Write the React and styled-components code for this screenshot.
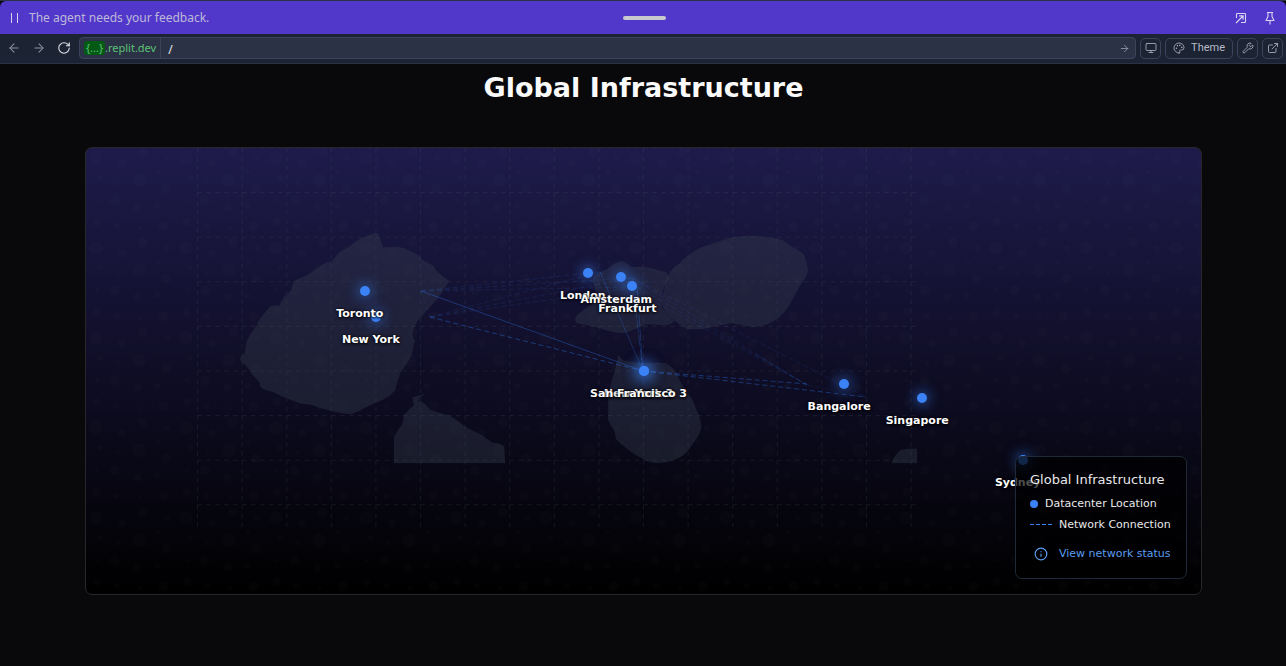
import React from 'react';
import styled, { createGlobalStyle } from 'styled-components';
import { ArrowLeft, ArrowRight, RotateCw, Monitor, Palette, Wrench, ExternalLink, Info } from 'lucide-react';

const GlobalStyle = createGlobalStyle`
  *, *::before, *::after { box-sizing: border-box; }
  body {
    margin: 0;
    background: #09090b;
    color: #fafafa;
    font-family: "DejaVu Sans", sans-serif;
  }
`;

const Shell = styled.div`
  display: flex;
  flex-direction: column;
  min-height: 100vh;
  border-top: 1px solid #2b3245;
`;

const AgentBar = styled.header`
  display: grid;
  grid-template-columns: 1fr auto 1fr;
  align-items: center;
  height: 33px;
  padding: 0 8px 0 10px;
  background: #5138cb;
  border-radius: 6px 6px 0 0;
`;

const AgentStatus = styled.div`
  display: flex;
  align-items: center;
  gap: 10px;
  color: #bdbad8;
  font: 12px/16px "Noto Sans", sans-serif;
`;

const PauseMark = styled.span`
  display: flex;
  justify-content: space-between;
  width: 9px;
  height: 10px;
  padding: 0 1px;

  &::before, &::after {
    content: "";
    width: 1px;
    background: #d6d3ec;
  }
`;

const DragHandle = styled.span`
  width: 43px;
  height: 4px;
  border-radius: 2px;
  background: #c8c9cf;
`;

const AgentActions = styled.div`
  display: flex;
  justify-content: flex-end;
  gap: 13px;
`;

const IconButton = styled.button`
  display: grid;
  place-items: center;
  width: 16px;
  height: 16px;
  padding: 0;
  border: 0;
  background: none;
  color: ${(p) => p.$color || '#d9d6f2'};
`;

const Toolbar = styled.nav`
  display: flex;
  align-items: center;
  gap: 4px;
  height: 30px;
  padding: 0 3px 1px 6px;
  background: #1c2333;
  border-bottom: 1px solid #2b3245;
`;

const NavButtons = styled.div`
  display: flex;
  gap: 9px;
  width: 69px;
`;

const AddressBar = styled.div`
  flex: 1;
  display: flex;
  align-items: center;
  height: 22px;
  padding-right: 3px;
  border: 1px solid #3c445c;
  border-radius: 4px;
  background: #2b3245;
`;

const Host = styled.label`
  display: flex;
  align-items: center;
  height: 20px;
  padding: 0 4px;
  border-right: 1px solid #3c445c;
  color: #5cc075;
  font: 11px/14px "Noto Sans", sans-serif;
`;

const HostId = styled.span`
  min-width: 21px;
  text-align: center;
  border-radius: 3px;
  background: #045a14;
`;

const PathInput = styled.input`
  flex: 1;
  min-width: 0;
  height: 20px;
  padding: 2px 7px 0;
  border: 0;
  outline: 0;
  background: none;
  color: #e4e7ec;
  font: 12px/14px "Noto Sans", sans-serif;
`;

const ToolButton = styled.button`
  display: flex;
  align-items: center;
  justify-content: center;
  gap: 6px;
  height: 21px;
  min-width: 21px;
  padding: 0 ${(p) => (p.$labelled ? 7 : 0)}px;
  border: 1px solid #3c445c;
  border-radius: 5px;
  background: none;
  color: #b4b9c4;
  font: 11px/14px Roboto, sans-serif;
`;

const Page = styled.main`
  flex: 1;
  padding: 8px 84px 68px 85px;
`;

const Title = styled.h1`
  margin: 0 0 43px;
  font-size: 27px;
  line-height: 32px;
  text-align: center;
`;

const MapCard = styled.section`
  position: relative;
  border: 1px solid #27272a;
  border-radius: 7px;
  background: linear-gradient(to bottom, #1e1b4b, #000000);
  overflow: hidden;
`;

const MapDrawing = styled.svg`
  display: block;
  width: 100%;
  height: auto;
`;

const Marker = styled.div`
  position: absolute;
  left: ${(p) => p.$x}%;
  top: ${(p) => p.$y}%;
  width: 10px;
  height: 10px;
  margin: -5px;
  border-radius: 50%;
  background: #3b82f6;
  box-shadow: 0 0 ${(p) => (p.$strong ? 14 : 13)}px ${(p) => (p.$strong ? 3 : 2)}px rgba(59, 130, 246, 0.6);
`;

const MarkerLabel = styled.span`
  position: absolute;
  top: 20px;
  left: 0;
  transform: translateX(-50%);
  white-space: nowrap;
  color: #ffffff;
  font-size: 11px;
  line-height: 16px;
  font-weight: 700;
  text-shadow: 0 0 3px rgba(0, 0, 0, 0.9), 0 1px 3px rgba(0, 0, 0, 0.9);
`;

const Legend = styled.aside`
  position: absolute;
  right: 14px;
  bottom: 15px;
  width: 172px;
  padding: 14px 14px 13px;
  border: 1px solid #1f2937;
  border-radius: 7px;
  background: rgba(0, 0, 0, 0.7);
`;

const LegendTitle = styled.h2`
  margin: 0 0 7px;
  font-size: 13px;
  line-height: 18px;
  font-weight: 400;
  white-space: nowrap;
  color: #e8e8ea;
`;

const LegendItem = styled.div`
  display: flex;
  align-items: center;
  gap: 7px;
  margin-bottom: 5px;
  font-size: 11px;
  line-height: 16px;
  white-space: nowrap;
  color: #e8e8ea;
`;

const DotKey = styled.span`
  width: 8px;
  height: 8px;
  border-radius: 50%;
  background: #3b82f6;
`;

const LineKey = styled.svg`
  width: 22px;
  height: 2px;
  flex: none;
`;

const StatusLink = styled.a`
  display: flex;
  align-items: center;
  gap: 11px;
  height: 22px;
  margin-top: 10px;
  padding-left: 4px;
  color: #5b9df0;
  font-size: 11px;
  line-height: 16px;
  text-decoration: none;
  white-space: nowrap;
`;

const locations = [
  { name: 'New York', x: 26, y: 38 },
  { name: 'Toronto', x: 25, y: 32 },
  { name: 'London', x: 45, y: 28 },
  { name: 'Amsterdam', x: 48, y: 29 },
  { name: 'Frankfurt', x: 49, y: 31 },
  { name: 'New York 3', x: 50, y: 50, strong: true },
  { name: 'San Francisco 3', x: 50, y: 50, strong: true },
  { name: 'Bangalore', x: 68, y: 53 },
  { name: 'Singapore', x: 75, y: 56 },
  { name: 'Sydney', x: 84, y: 70 },
];

// Bubble texture tile: [cx, cy, r]
const bubbles = [
  [11, 11, 7], [59, 36, 7], [16, 33, 3], [79, 64, 3], [34, 87, 3], [90, 11, 3],
  [12, 82, 4], [40, 17, 4], [63, 5, 5], [57, 66, 4], [86, 87, 5], [32, 58, 5],
  [89, 45, 5], [80, 27, 2], [60, 89, 2], [35, 39, 2], [12, 58, 2],
];

const columns = Array.from({ length: 17 }, (_, i) => 100 + i * 40);
const rows = Array.from({ length: 9 }, (_, i) => i * 40);

// Network routes: [x1, y1, x2, y2, opacity, dash]
const routes = [
  [421, 291, 643, 371, 0.34, 'none'],
  [430, 317, 643, 371, 0.4, '5 3'],
  [600, 272, 643, 371, 0.26, 'none'],
  [632, 279, 643, 371, 0.26, '12 2'],
  [637, 287, 643, 371, 0.26, '12 2'],
  [643, 371, 807, 384, 0.36, '5 3'],
  [643, 371, 866, 397, 0.36, '5 3'],
  [421, 291, 600, 272, 0.14, '5 3'],
  [421, 291, 632, 278, 0.12, '5 3'],
  [421, 291, 637, 287, 0.12, '5 3'],
  [430, 317, 600, 272, 0.12, '5 3'],
  [430, 317, 632, 278, 0.12, '5 3'],
  [430, 317, 637, 287, 0.12, '5 3'],
  [421, 291, 430, 317, 0.1, '5 3'],
  [600, 272, 807, 385, 0.1, '5 3'],
  [632, 278, 807, 385, 0.11, '5 3'],
  [637, 287, 807, 385, 0.11, '5 3'],
  [755, 354, 805, 384, 0.12, 'none'],
  [632, 278, 866, 397, 0.12, '5 3'],
  [807, 385, 866, 397, 0.08, '5 3'],
];

const PopOutIcon = () => (
  <svg width="12" height="12" viewBox="0 0 12 12" fill="none" stroke="currentColor" strokeWidth="1.1" aria-hidden="true">
    <path d="M1.5 6V2.2Q1.5 1.5 2.2 1.5H9.8Q10.5 1.5 10.5 2.2V9.8Q10.5 10.5 9.8 10.5H6M1 11L8 4M4.2 3.9H8.1V7.8" />
  </svg>
);

const PinIcon = () => (
  <svg width="10" height="14" viewBox="0 0 10 14" fill="none" stroke="currentColor" strokeWidth="1.1" strokeLinejoin="round" aria-hidden="true">
    <path d="M2 1.5H8M3 1.5V5.5L1 9.5H9L7 5.5V1.5M5 9.5V13.5" />
  </svg>
);

const WorldMap = () => (
  <MapDrawing viewBox="86 148 1115 446" aria-hidden="true">
    <defs>
      <pattern id="bubbles" x="86" y="148" width="90" height="90" patternUnits="userSpaceOnUse" viewBox="0 0 100 100">
        {bubbles.map(([cx, cy, r]) => (
          <circle key={`${cx}-${cy}`} cx={cx} cy={cy} r={r} fill="#9c92ac" fillOpacity="0.018" />
        ))}
      </pattern>
    </defs>
    <rect x="86" y="148" width="1115" height="446" fill="url(#bubbles)" />

    <g fill="#374151" fillOpacity="0.36" stroke="#4b5563" strokeOpacity="0.12" strokeWidth="2" strokeLinejoin="round">
      <g transform="translate(220 210) scale(0.3333)">
        <path d="M470 69Q476 70 478 80L489 113Q512 110 535 111Q554 114 570 123Q588 130 600 140Q604 149 612 153L640 168Q646 180 655 188L687 214L660 255Q648 272 630 290L590 335Q578 355 576 375L585 394Q580 400 580 410Q578 425 572 440Q558 465 540 490Q530 515 524 542Q510 558 490 568L440 590Q418 604 395 611Q366 612 340 604Q304 596 275 584L240 580L190 560L163 547L130 537Q119 532 120 520Q112 506 100 497Q86 476 75 462Q62 455 60 446Q66 434 75 430Q76 410 82 390Q96 364 112 345Q112 335 120 326L150 290Q164 286 178 287Q184 276 192 262Q204 252 216 240Q216 226 222 213L260 197L310 163Q322 155 335 155L355 130Q370 118 385 113Q400 98 415 90Q432 80 450 75Z" />
        <path d="M578 563L612 553Q596 562 593 576L602 574Q620 584 630 600Q660 610 690 618Q710 630 735 650Q760 664 785 676L818 699Q840 698 852 712L855 759H522V685Q528 668 546 645Q552 630 552 615Q568 600 582 586Z" />
      </g>
      <g transform="translate(540 220) scale(0.3333)">
        <path d="M160 185Q158 172 168 164Q182 154 200 150Q215 132 246 124Q262 130 272 141L312 141Q344 146 380 158L386 174Q372 195 366 220L366 262Q378 285 402 303Q392 315 375 315Q340 312 318 313Q280 332 250 339Q215 338 180 324Q150 316 112 310Q100 300 112 286Q140 262 176 240Q166 215 160 185Z" />
        <path d="M386 165Q394 145 415 134Q440 105 485 82Q530 68 560 56Q600 46 650 48Q690 52 728 61Q750 78 790 101Q800 125 804 150Q798 175 780 195Q765 225 745 260Q725 288 700 304Q670 320 640 321Q608 315 575 309Q530 318 490 326Q465 328 442 327Q410 310 385 285Q366 265 366 240Q370 220 374 208Q376 180 386 165Z" />
        <path d="M232 420L236 406Q240 416 252 422Q290 430 320 430Q350 428 377 430Q400 442 412 465Q420 490 440 515Q458 535 466 562Q480 590 484 620Q480 645 460 668Q445 695 420 712Q390 727 355 729Q330 729 310 717Q285 705 262 686Q240 670 228 656Q228 635 216 620L205 600V548Q208 510 216 482Q226 455 232 420Z" />
      </g>
      <g transform="translate(780 340) scale(0.3333)">
        <path d="M336 369Q340 350 362 330Q384 326 411 326V369Z" />
      </g>
    </g>

    <g transform="translate(86 148) scale(1.115)" stroke="#4b5563" strokeOpacity="0.21" strokeWidth="1" strokeDasharray="4 4">
      {columns.map((x) => <path key={x} d={`M${x} 0V340`} />)}
      {rows.map((y) => <path key={y} d={`M100 ${y}H745`} />)}
    </g>

    <g stroke="#2f7bf6" strokeWidth="1">
      {routes.map(([x1, y1, x2, y2, o, dash]) => (
        <path key={`${x1}-${y1}-${x2}-${y2}`} d={`M${x1} ${y1}L${x2} ${y2}`} strokeOpacity={o} strokeDasharray={dash} />
      ))}
    </g>
  </MapDrawing>
);

export default function App() {
  return (
    <>
      <GlobalStyle />
      <Shell>
        <AgentBar>
          <AgentStatus><PauseMark />The agent needs your feedback.</AgentStatus>
          <DragHandle />
          <AgentActions>
            <IconButton aria-label="Pop out"><PopOutIcon /></IconButton>
            <IconButton aria-label="Pin"><PinIcon /></IconButton>
          </AgentActions>
        </AgentBar>

        <Toolbar>
          <NavButtons>
            <IconButton aria-label="Back" $color="#8d93a1"><ArrowLeft size={14} strokeWidth={1.8} /></IconButton>
            <IconButton aria-label="Forward" $color="#8d93a1"><ArrowRight size={14} strokeWidth={1.8} /></IconButton>
            <IconButton aria-label="Reload" $color="#e4e7ec"><RotateCw size={14} strokeWidth={1.8} /></IconButton>
          </NavButtons>
          <AddressBar>
            <Host htmlFor="path"><HostId>{'{...}'}</HostId>.replit.dev</Host>
            <PathInput id="path" defaultValue="/" />
            <IconButton aria-label="Go" $color="#8d93a1"><ArrowRight size={11} /></IconButton>
          </AddressBar>
          <ToolButton aria-label="Device size"><Monitor size={12} strokeWidth={1.6} /></ToolButton>
          <ToolButton $labelled><Palette size={12} strokeWidth={1.6} />Theme</ToolButton>
          <ToolButton aria-label="Developer tools"><Wrench size={12} strokeWidth={1.6} /></ToolButton>
          <ToolButton aria-label="Open in new tab"><ExternalLink size={12} strokeWidth={1.6} /></ToolButton>
        </Toolbar>

        <Page>
          <Title>Global Infrastructure</Title>
          <MapCard>
            <WorldMap />
            {locations.map((l) => (
              <Marker key={l.name} $x={l.x} $y={l.y} $strong={l.strong}>
                <MarkerLabel>{l.name}</MarkerLabel>
              </Marker>
            ))}
            <Legend>
              <LegendTitle>Global Infrastructure</LegendTitle>
              <LegendItem><DotKey />Datacenter Location</LegendItem>
              <LegendItem>
                <LineKey viewBox="0 0 22 2" aria-hidden="true">
                  <path d="M0 0.5H22" stroke="#3b82f6" strokeDasharray="4 2" />
                </LineKey>
                Network Connection
              </LegendItem>
              <StatusLink href="#status"><Info size={14} />View network status</StatusLink>
            </Legend>
          </MapCard>
        </Page>
      </Shell>
    </>
  );
}
